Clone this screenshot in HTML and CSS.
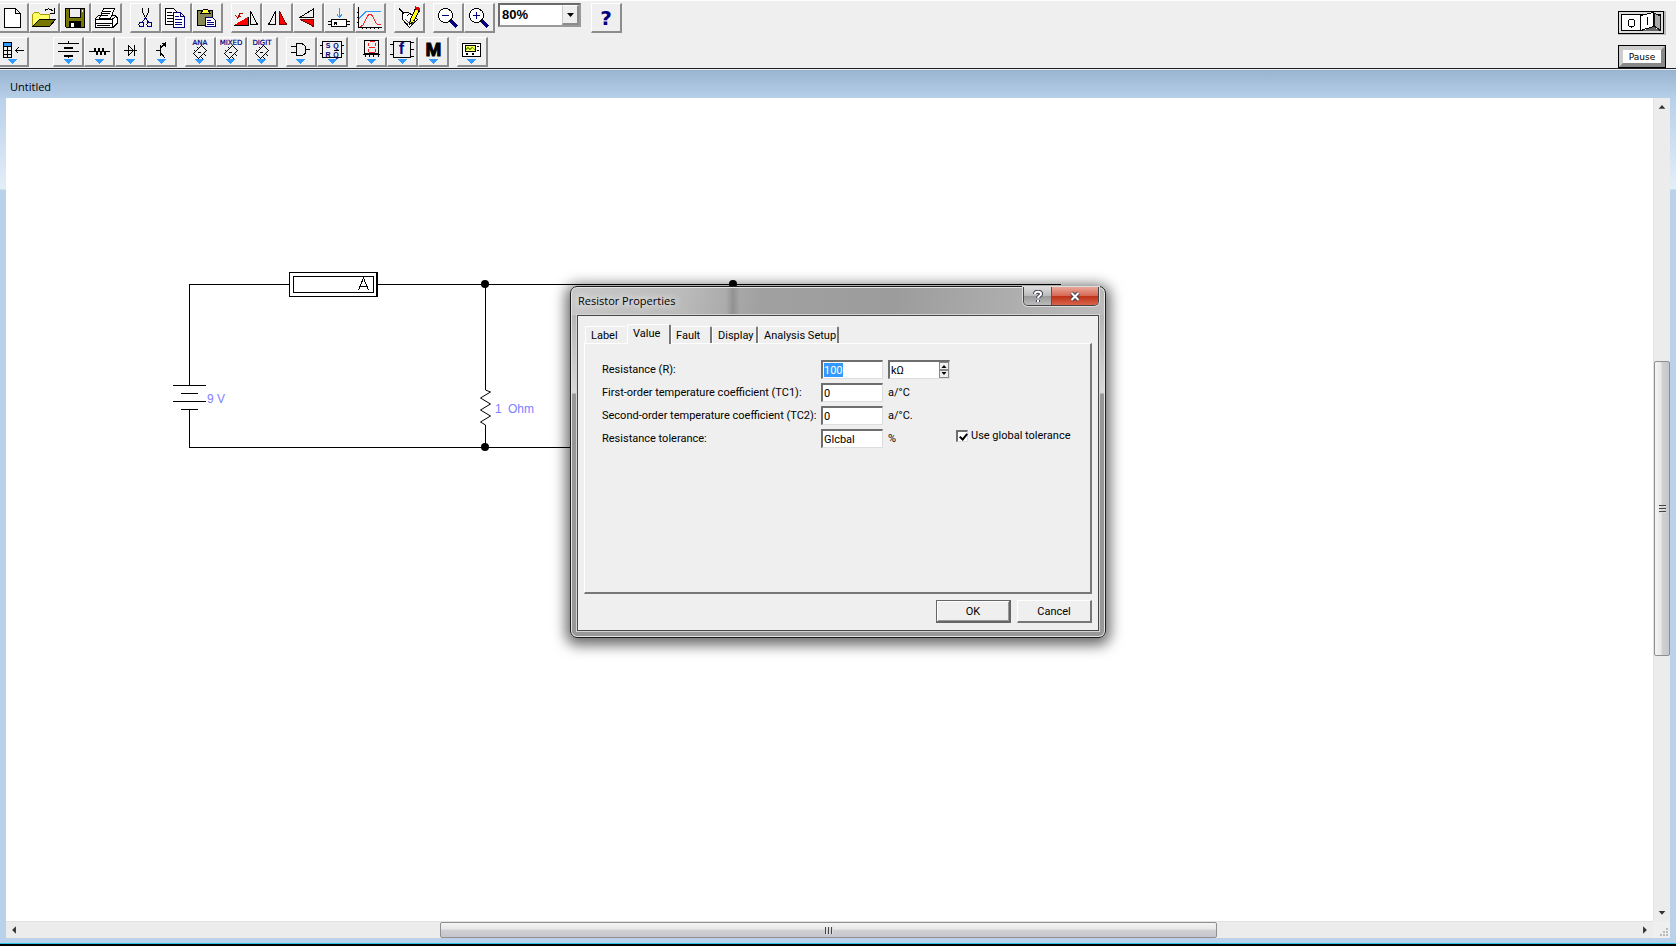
FILE: index.html
```html
<!DOCTYPE html>
<html lang="en">
<head>
<meta charset="utf-8">
<title>Untitled</title>
<link rel="stylesheet" href="styles.css">
</head>
<body>
<header class="toolbars">
  <div class="rows">
    <div class="row">
      <div class="group">
        <button class="tool" aria-label="New"><svg viewBox="-1 4 28 27"><path class="w k" d="M4.500 8.500h11l5 5v14h-16zM15.500 8.500v5h5"/></svg></button>
        <button class="tool" aria-label="Open"><svg viewBox="30 4 28 27"><path d="M32.500 26.500v-12l2-2h4l2 2h9v5" fill="#ff6" stroke="#a90"/><path class="k" d="M32.500 26.500l7-7h16l-6 7z" fill="#770"/><path class="n k" d="M44.500 11.500c2-4 6-3 9 0M54.500 8v5h-5"/></svg></button>
        <button class="tool" aria-label="Save"><svg viewBox="61 4 28 27"><path class="k" d="M65.500 8.500h19v19h-18l-1-1z" fill="#770"/><path class="k" d="M69.500 8.500h11v9h-11z" fill="#eee"/><path d="M69 21h12v7h-12z"/><path d="M71 23h3v4h-3z" fill="#fff"/><path d="M82 10h1v2h-1z" fill="#fff"/></svg></button>
        <button class="tool" aria-label="Print"><svg viewBox="93 4 28 27"><path class="w k" d="M100.500 18.500l4-10h11l-4 10zM95.500 19.500l4-4h2M113 15.500h3l2 2v6l-4 4h-18v-8h17l4-3M113.500 19.500v8M96 23.500h17"/><path class="n k" d="M104 11.500h8M103 13.500h8M102 15.500h7M98 25.500h13"/></svg></button>
      </div>
      <div class="group">
        <button class="tool" aria-label="Cut"><svg viewBox="131 4 28 27"><path class="n k" d="M142.500 8v4l4 8M148.500 8v4l-4 8"/><g class="n navy"><circle cx="141.500" cy="24.500" r="2.500"/><circle cx="149.500" cy="24.500" r="2.500"/><path d="M145.500 18l-3 4M145.500 18l3 4"/></g></svg></button>
        <button class="tool" aria-label="Copy"><svg viewBox="162 4 28 27"><path class="w k" d="M165.500 8.500h8l3 3v13h-11z"/><path class="n k" d="M167 12.500h5M167 15.500h6M167 18.500h6M167 21.500h6"/><path class="w navy" d="M173.500 12.500h7l4 4v11h-11zM180.500 12.500v4h4"/><path class="n navy" d="M175 16.500h4M175 19.500h7M175 22.500h7M175 24.500h7"/></svg></button>
        <button class="tool" aria-label="Paste"><svg viewBox="193 4 28 27"><path class="k" d="M197.500 10.500h15v15h-15z" fill="#885"/><path class="k" d="M200.500 13.500l3-4h4l3 4z" fill="#ff3"/><path class="w navy" d="M205.500 17.500h7l3 3v6h-10z"/><path class="n navy" d="M207 20.500h4M207 22.500h7M207 24.500h7"/></svg></button>
      </div>
      <div class="group">
        <button class="tool" aria-label="Rotate"><svg viewBox="232 4 28 27"><path d="M234 25l14-8v8z" fill="#f00"/><path class="n k" d="M234 25.500h14.500v-9M250.500 11.500v13h7z"/><path class="n" stroke="#b00" d="M243 13.500h-3l-2 4M235.500 15l2 3 3-2"/></svg></button>
        <button class="tool" aria-label="Flip horizontal"><svg viewBox="263 4 28 27"><path class="n k" d="M275.500 11.500v13h-7z"/><path d="M279.500 11.500v13h7z" fill="#f00" stroke="#700"/></svg></button>
        <button class="tool" aria-label="Flip vertical"><svg viewBox="294 4 28 27"><path class="n k" d="M300.500 17l13-8v8z"/><path d="M300.500 19.500h13v7z" fill="#f00" stroke="#700"/></svg></button>
        <button class="tool" aria-label="Component properties"><svg viewBox="325 4 28 27"><path class="n" stroke="#39f" d="M339.500 8v9M337 14.500l2.500 3 2.500-3"/><path class="w k" d="M331.500 19.500h15v7h-15z"/><path class="n k" d="M328 21.500h3M328 24.500h3M347 21.500h3M347 24.500h3M334.500 25v-3h2v3M335 23.500h2"/></svg></button>
        <button class="tool" aria-label="Graph"><svg viewBox="357 4 28 27"><path class="n k" d="M359.500 7v20.500h23M358 12.500h2M358 17.500h2M358 22.500h2M363.500 27v2M367.500 27v2M371.500 27v2M375.500 27v2M379.500 27v2"/><path class="n" stroke="#39f" d="M360 18.500l7-7h15"/><path class="n" stroke="#f22" d="M361 26.500c6 0 5-12 10-12s4 10 8 10h3"/></svg></button>
      </div>
      <div class="group">
        <button class="tool" aria-label="Describe"><svg viewBox="395 4 28 27"><path class="w k" d="M402.500 12.500h6l9 7-8 8-7-8z"/><path class="n k" d="M399 8.500l5 5M402.500 19.500v-7M407 15.500l3-2"/><path class="n" stroke="#555" d="M405 19l5 5M407 24l7-6M411 25l4-4"/><path class="k" d="M415.500 8.500l4 2-6 11-4 3 1-5z" fill="#ff0"/><path d="M415 6l5 2v3l-5-2z" fill="#d00"/></svg></button>
      </div>
      <div class="group">
        <button class="tool" aria-label="Zoom out"><svg viewBox="435 4 28 27"><circle class="w k" cx="446.500" cy="15.500" r="7"/><path class="n navy" d="M443 15.500h7"/><path class="n navy thick" d="M452 21l6 6"/></svg></button>
        <button class="tool" aria-label="Zoom in"><svg viewBox="465 4 28 27"><circle class="w k" cx="476.500" cy="15.500" r="7"/><path class="n navy" d="M473 15.500h7M476.500 12v7"/><path class="n navy thick" d="M482 21l6 6"/></svg></button>
      </div>
      <div class="zoom">
        <select aria-label="Zoom level"><option>80%</option></select>
        <svg class="drop" viewBox="0 0 14 17"><path d="M4 7h7l-3.500 4z"/></svg>
      </div>
      <div class="group">
        <button class="tool help" aria-label="Help">?</button>
      </div>
    </div>
    <div class="row">
      <div class="group bin">
        <button class="tool" aria-label="Parts bin"><svg viewBox="-1 38 28 27"><path d="M3 42h9v4h-9z" fill="#39f"/><path class="n k" d="M3.500 42.500h8v15h-8zM3 46.500h9M3 50.500h9M3 54.500h9M7.500 46v12M15 50.500h9M18.500 47.500l-3 3 3 3"/><path class="tri" d="M8 59h9l-4.500 5z"/></svg></button>
      </div>
      <div class="group">
        <button class="tool" aria-label="Sources"><svg viewBox="54 38 28 27"><path class="n k" d="M68.500 41v3M58 43.500h21M58 51.500h21M68.500 55v3"/><path d="M64 47h9v2h-9zM64 55h9v2h-9z"/><path class="tri" d="M64 59h9l-4.500 5z"/></svg></button>
        <button class="tool" aria-label="Basic"><svg viewBox="85 38 28 27"><path class="n k" d="M89 51.500h5l1-3 2 6 2-6 2 6 2-6 2 6 1-3h4"/><path class="tri" d="M95 59h9l-4.500 5z"/></svg></button>
        <button class="tool" aria-label="Diodes"><svg viewBox="116 38 28 27"><path class="n k" d="M124 50.500h13M128.500 45.500v10l5-5zM134.500 45v11"/><path class="tri" d="M126 59h9l-4.500 5z"/></svg></button>
        <button class="tool" aria-label="Transistors"><svg viewBox="147 38 28 27"><path class="n k" d="M156 50.500h4M160.500 45v11M160 49l6-7M160 52l5 6"/><path d="M161 43h5v4z"/><path class="tri" d="M157 59h9l-4.500 5z"/></svg></button>
      </div>
      <div class="group">
        <button class="tool" aria-label="Analog ICs"><svg viewBox="186 38 28 27"><text class="tiny" x="200" y="45">ANA</text><path class="n k" d="M193.500 53.500l8-8 5 5-8 8zM194 50l2 2M197 47l2 2M204 54l2 2M201 57l2 2M198 52.500h3"/><path class="tri" d="M195 59h9l-4.500 5z"/></svg></button>
        <button class="tool" aria-label="Mixed ICs"><svg viewBox="217 38 28 27"><text class="tiny" x="231" y="45">MIXED</text><path class="n k" d="M224.500 53.500l8-8 5 5-8 8zM225 50l2 2M228 47l2 2M235 54l2 2M232 57l2 2M229 52.500h3"/><path class="tri" d="M226 59h9l-4.500 5z"/></svg></button>
        <button class="tool" aria-label="Digital ICs"><svg viewBox="248 38 28 27"><text class="tiny" x="262" y="45">DIGIT</text><path class="n k" d="M255.500 53.500l8-8 5 5-8 8zM256 50l2 2M259 47l2 2M266 54l2 2M263 57l2 2M260 52.500h3"/><path class="tri" d="M257 59h9l-4.500 5z"/></svg></button>
      </div>
      <div class="group">
        <button class="tool" aria-label="Logic gates"><svg viewBox="288 38 28 27"><path class="n k" d="M297.500 43.500h5c6 2 6 11 0 12h-5zM292 46.500h5M292 52.500h5M307 49.500h4"/><path class="tri" d="M297 59h9l-4.500 5z"/></svg></button>
        <button class="tool" aria-label="Digital"><svg viewBox="318 38 28 27"><path class="n k" d="M322.500 41.500h19v16h-19z"/><path class="n k" d="M320 45.500h3M320 53.500h3M342 45.500h2M342 53.500h2M334 50.500h5"/><text class="mini" x="328" y="48">S</text><text class="mini" x="336" y="48">Q</text><text class="mini" x="328" y="57">R</text><text class="mini" x="336" y="57">Q</text><path class="tri" d="M328 59h9l-4.500 5z"/></svg></button>
      </div>
      <div class="group">
        <button class="tool" aria-label="Indicators"><svg viewBox="357 38 28 27"><path class="n k" d="M364.500 40.500h14v13h-14z"/><path class="n" stroke="#e22" d="M369.500 41.500h5M368.500 43v3M375.500 43v3M369 47.500h6M368.500 49v3M375.500 49v3M369 52.500h6"/><path class="n k" d="M363 54.500h17M365.500 55v2M369.500 55v2M373.500 55v2M378.500 55v2"/><path class="tri" d="M367 59h9l-4.500 5z"/></svg></button>
        <button class="tool" aria-label="Controls"><svg viewBox="388 38 28 27"><path class="n k" d="M393.500 41.500h17v16h-17z"/><path class="n k" d="M390 44.500h3M390 54.500h3M411 42.500h3M411 49.500h3M411 56.500h3"/><text class="letter f" x="401.500" y="54">f</text><path class="tri" d="M398 59h9l-4.500 5z"/></svg></button>
        <button class="tool" aria-label="Miscellaneous"><svg viewBox="419 38 28 27"><text class="letter m" x="433.500" y="56">M</text><path class="tri" d="M429 59h9l-4.500 5z"/></svg></button>
      </div>
      <div class="group">
        <button class="tool" aria-label="Instruments"><svg viewBox="458 38 28 27"><path class="w k" d="M462.500 43.500h18v13h-18z"/><path class="k" d="M465.500 45.500h10v6h-10z" fill="#ff6"/><path class="n" stroke="#6a0" d="M466 49.500l2-2 2 2 2-2 3 2"/><path d="M466 53h2v2h-2zM472 53h2v2h-2zM477 46h2v1h-2zM477 50h2v1h-2z"/><path class="tri" d="M467 59h9l-4.500 5z"/></svg></button>
      </div>
    </div>
  </div>
  <div class="run">
    <button class="power" aria-label="Power switch"><svg viewBox="0 0 48 24"><path d="M0 0h48v24H0z" fill="#bbb"/><path class="k" d="M.500 .500h45v22H.500z" fill="#ddd"/><path class="w k" d="M3.500 3.500h39v16h-39z"/><ellipse class="n k" cx="13.500" cy="12" rx="3.500" ry="4"/><path class="w k" d="M22.500 4.500l13-3v14l-13 4z"/><path d="M36 2l6 3v14l-6-4z" fill="#aaa" stroke="#111"/><path d="M23 20l13-4 6 4z" fill="#666"/><path class="n k" d="M29.500 6v8"/></svg></button>
    <button class="pause">Pause</button>
  </div>
</header>

<main class="window">
  <h1 class="caption">Untitled</h1>
  <div class="body">
    <section class="canvas" aria-label="Circuit">
      <svg class="circuit" viewBox="6 98 1100 380">
        <path class="n k" d="M189.500 385v-100.500h100M378 284.500h683M485.500 284v106M485.500 425v22M189.500 409v38.500h390M173 385.500h33M181 393.500h17M173 401.500h33M181 409.500h17"/>
        <path class="n k" d="M289.500 272.500h88v24h-88zM376.500 272v25M293.500 276.500h80v16h-80zM358.500 290l5-12 5 12M360 286.500h7"/>
        <path class="n k smooth" d="M485.500 390l5 2-10 6 10 6-10 6 10 6-10 6 5 3"/>
        <circle cx="485" cy="284" r="4"/><circle cx="485" cy="447" r="4"/><circle cx="733" cy="284" r="4"/>
        <text class="value" x="207" y="403">9 V</text>
        <text class="value" x="495" y="413">1</text>
        <text class="value" x="508" y="413">Ohm</text>
      </svg>

      <div class="dialog" role="dialog" aria-labelledby="dlg-title">
        <div class="titlebar">
          <h2 id="dlg-title">Resistor Properties</h2>
          <div class="sysbuttons">
            <button class="ask" aria-label="Help"><svg viewBox="0 0 12 13"><path class="glyph" d="M3 4c0-3 6-3 6 0 0 2-3 2-3 4M6 10v2"/><path class="glyph in" d="M3 4c0-3 6-3 6 0 0 2-3 2-3 4M6 10v2"/></svg></button>
            <button class="close" aria-label="Close"><svg viewBox="0 0 12 13"><path class="glyph" d="M2.500 3l7 7M9.500 3l-7 7"/><path class="glyph in" d="M2.500 3l7 7M9.500 3l-7 7"/></svg></button>
          </div>
        </div>
        <form class="client">
          <div class="tabs" role="tablist">
            <button type="button" class="tab t1" role="tab">Label</button>
            <button type="button" class="tab t2 on" role="tab" aria-selected="true">Value</button>
            <button type="button" class="tab t3" role="tab">Fault</button>
            <button type="button" class="tab t4" role="tab">Display</button>
            <button type="button" class="tab t5" role="tab">Analysis Setup</button>
          </div>
          <div class="panel" role="tabpanel">
            <label for="res">Resistance (R):</label>
            <div class="field"><input class="picked" id="res" value="100" size="3"></div>
            <div class="field unit"><input id="unit" aria-label="Unit" value="kΩ">
              <span class="spin"><button type="button" aria-label="Larger unit"><svg viewBox="0 0 7 4"><path d="M1 4l2.500-3 2.500 3z"/></svg></button><button type="button" aria-label="Smaller unit"><svg viewBox="0 0 7 4"><path d="M1 0l2.500 3 2.500-3z"/></svg></button></span></div>
            <label for="tc1">First-order temperature coefficient (TC1):</label>
            <div class="field"><input id="tc1" value="0"></div>
            <span class="suffix">a/°C</span>
            <label for="tc2">Second-order temperature coefficient (TC2):</label>
            <div class="field"><input id="tc2" value="0"></div>
            <span class="suffix">a/°C.</span>
            <label for="tol">Resistance tolerance:</label>
            <div class="field"><input id="tol" value="Glcbal"></div>
            <span class="suffix">%</span>
            <label class="check"><input type="checkbox" checked> Use global tolerance</label>
          </div>
          <div class="actions">
            <button type="button" class="push default">OK</button>
            <button type="button" class="push">Cancel</button>
          </div>
        </form>
      </div>
    </section>
    <div class="vbar">
      <svg class="arrow" viewBox="0 0 17 17"><path d="M5 11l3.500-4 3.500 4z"/></svg>
      <div class="track"><div class="thumb"><i></i><i></i><i></i></div></div>
      <svg class="arrow" viewBox="0 0 17 17"><path d="M5 7l3.500 4 3.500-4z"/></svg>
    </div>
    <div class="hbar">
      <svg class="arrow" viewBox="0 0 17 17"><path d="M10 4.500l-4 4 4 4z"/></svg>
      <div class="track"><div class="thumb"><i></i><i></i><i></i></div></div>
      <svg class="arrow" viewBox="0 0 17 17"><path d="M7 4.500l4 4-4 4z"/></svg>
    </div>
    <svg class="grip" viewBox="0 0 17 17"><path d="M13 7h2v2h-2zM10 10h2v2h-2zM13 10h2v2h-2zM7 13h2v2h-2zM10 13h2v2h-2zM13 13h2v2h-2z"/></svg>
  </div>
</main>
</body>
</html>
```
FILE: styles.css
```css
* { box-sizing: border-box; }
body {
  margin: 0;
  height: 100vh;
  display: flex;
  flex-direction: column;
  overflow: hidden;
  background: #b9d1ea;
  color: #000;
  font: 11px/13px Roboto, Arial, sans-serif;
}
button, input, select { font: inherit; color: inherit; margin: 0; padding: 0; }
h1, h2 { margin: 0; font-weight: normal; font-family: "Open Sans", sans-serif; }
svg { display: block; }

/* stroke and fill helpers for the line icons */
.w { fill: #fff; }
.n { fill: none; }
.k { stroke: #000; }
.navy { stroke: #000080; }
.thick { stroke-width: 3; }
.tri { fill: #3399ff; }

/* toolbars */
.toolbars {
  display: flex;
  justify-content: space-between;
  background: #efefef;
  border-top: 1px solid #fff;
  border-bottom: 1px solid #222;
}
.rows { display: flex; flex-direction: column; gap: 4px; padding: 2px 0 1px; margin-left: -2px; }
.row { display: flex; gap: 8px; }
.group { display: flex; }
.bin { margin-right: 16px; }
.tool {
  width: 31px;
  height: 30px;
  background: #efefef;
  border: solid;
  border-width: 1px 2px 2px 1px;
  border-color: #fff #8c8c8c #8c8c8c #fff;
}
.tool svg { width: 28px; height: 27px; shape-rendering: crispEdges; }
.help { color: #000080; font: bold 20px/26px "DejaVu Sans", sans-serif; }
.tiny { font: 7px "DejaVu Sans", sans-serif; fill: #000080; stroke: #000080; stroke-width: .200px; text-anchor: middle; }
.mini { font: bold 7px "Liberation Sans", sans-serif; fill: #000080; text-anchor: middle; }
.letter { font-family: "Liberation Sans", sans-serif; font-weight: bold; text-anchor: middle; }
.f { font-size: 16px; fill: #000080; }
.m { font-size: 19px; stroke: #000; stroke-width: 1px; }
.zoom {
  position: relative;
  width: 83px;
  height: 24px;
  margin: 0 2px 0 -5px;
  border: 2px solid;
  border-color: #6a6a6a #999 #999 #6a6a6a;
  background: #fff;
}
.zoom select {
  appearance: none;
  width: 100%;
  height: 18px;
  border: 0;
  padding-left: 2px;
  background: #fff;
  font: bold 13px "Liberation Sans", sans-serif;
}
.drop {
  position: absolute;
  top: 0;
  right: 0;
  width: 17px;
  height: 20px;
  background: #efefef;
  border: solid;
  border-width: 1px 2px 2px 1px;
  border-color: #fff #8c8c8c #8c8c8c #ccc;
  pointer-events: none;
}
.run { display: flex; flex-direction: column; gap: 10px; padding: 10px 10px 0 0; }
.power { width: 48px; height: 24px; border: 0; background: none; }
.power svg { width: 48px; height: 24px; shape-rendering: crispEdges; }
.pause {
  width: 48px;
  height: 23px;
  background: #fff;
  border: 5px solid;
  border-color: #ccc #888 #888 #ccc;
  outline: 1px solid #000;
  outline-offset: -1px;
  font: 9px/12px "DejaVu Sans", sans-serif;
}

/* document window */
.window {
  flex: 1;
  min-height: 0;
  display: flex;
  flex-direction: column;
  padding: 0 6px 6px;
  background: linear-gradient(#99b4d1, #b9d1ea 30px, #e4eef8 119px, #b9d1ea 120px);
  border-top: 1px solid #e8eef4;
  border-bottom: 2px solid #000;
  box-shadow: inset 0 -1px #2cc4e4;
}
.caption { height: 28px; padding: 0 4px; font-size: 11px; line-height: 34px; }
.body {
  flex: 1;
  min-height: 0;
  display: grid;
  grid-template: minmax(0, 1fr) 17px / minmax(0, 1fr) 17px;
}
.canvas { position: relative; background: #fff; overflow: hidden; }
.circuit { width: 1100px; height: 380px; shape-rendering: crispEdges; }
.circuit circle, .smooth { shape-rendering: auto; }
.value { font: 12px "Liberation Sans", sans-serif; fill: #8080ff; }

.vbar, .hbar { display: flex; background: #ececec; }
.vbar { flex-direction: column; border-left: 1px solid #e2e2e2; }
.hbar { border-top: 1px solid #e2e2e2; }
.arrow { flex: none; width: 17px; height: 17px; fill: #333; }
.vbar .arrow { width: 16px; }
.hbar .arrow { height: 16px; }
.track { flex: 1; display: flex; }
.thumb { display: flex; justify-content: center; align-items: center; gap: 1px; border: 1px solid #8f8f8f; border-radius: 2px; }
.vbar .track { flex-direction: column; }
.vbar .thumb { flex-direction: column; height: 37.400%; margin-top: 246px; background: linear-gradient(90deg, #f5f5f5, #e6e6e8 45%, #cfcfd4 50%, #c6c6cc); }
.hbar .thumb { width: 48.200%; margin-left: 417px; background: linear-gradient(#f5f5f5, #e6e6e8 45%, #cfcfd4 50%, #c6c6cc); }
.thumb i { background: #444; border: 0 solid #ddd; }
.vbar i { width: 7px; height: 2px; border-bottom-width: 1px; }
.hbar i { width: 2px; height: 7px; border-right-width: 1px; }
.grip { width: 17px; height: 17px; background: #efefef; fill: #bbb; }

/* dialog floating over the circuit */
.dialog {
  position: absolute;
  left: 564px;
  top: 188px;
  width: 536px;
  padding: 0 6px 6px;
  border: 1px solid #1c1c1c;
  border-radius: 7px;
  background:
    linear-gradient(90deg, transparent 155px, rgba(90, 90, 90, .3) 162px, transparent 169px) 0 0 / 100% 28px no-repeat,
    linear-gradient(100deg, #c8c8c8, #bbb 110px, #a0a0a0 190px, #9c9c9c 320px, #bcbcbc) 0 0 / 100% 28px no-repeat,
    linear-gradient(#aaa, #d8d8d8 106px, #989898 107px);
  box-shadow: inset 0 0 0 1px #e4e4e4, 0 3px 14px 4px rgba(0, 0, 0, .6);
}
.titlebar { display: flex; justify-content: space-between; height: 28px; }
.titlebar h2 { padding-left: 1px; font-size: 11px; line-height: 28px; text-shadow: 0 0 8px #fff, 0 0 8px #fff; }
.sysbuttons { display: flex; height: 19px; border: 1px solid #444; border-top: 0; border-radius: 0 0 5px 5px; overflow: hidden; box-shadow: 0 0 0 1px #ddd; }
.sysbuttons button { display: flex; justify-content: center; align-items: center; border: 0; }
.sysbuttons svg { width: 12px; height: 13px; }
.ask { width: 27px; background: linear-gradient(#ddd, #bbb 48%, #999 50%, #bbb); }
.close { width: 47px; background: linear-gradient(#e9a799, #d66a55 48%, #bd3018 50%, #d8644a); }
.sysbuttons .close { border-left: 1px solid #555; }
.glyph { fill: none; stroke: #445; stroke-width: 4; }
.in { stroke: #fff; stroke-width: 2; }
.client {
  padding: 8px 6px 7px;
  border: 1px solid #484848;
  background: #efefef;
  box-shadow: 0 0 0 1px #d4d4d4;
}
.tabs { display: flex; align-items: flex-end; height: 19px; padding-left: 1px; }
.tab {
  height: 17px;
  border: solid;
  border-width: 1px 2px 0 1px;
  border-color: #fff #777 #fff #fff;
  border-radius: 2px 2px 0 0;
  background: #efefef;
  text-align: left;
  padding-left: 5px;
  white-space: nowrap;
}
.t1 { width: 42px; border-right-color: #efefef; }
.t2 { width: 44px; }
.t3 { width: 41px; padding-left: 4px; }
.t4 { width: 46px; }
.t5 { width: 81px; }
.on { position: relative; height: 20px; margin-bottom: -1px; padding-bottom: 3px; }
.panel {
  display: grid;
  grid-template-columns: 219px 62px 62px 1fr;
  grid-auto-rows: 19px;
  row-gap: 4px;
  align-items: center;
  height: 251px;
  padding: 16px 16px 16px 17px;
  border: solid;
  border-width: 1px 2px 2px 1px;
  border-color: #fff #777 #777 #fff;
}
.panel > label { grid-column: 1; }
.panel > .check { grid-column: 4; align-self: start; display: flex; align-items: center; gap: 3px; padding-left: 11px; }
.field {
  display: flex;
  height: 19px;
  border: solid;
  border-width: 2px 1px 1px 2px;
  border-color: #6e6e6e #ddd #ddd #6e6e6e;
  background: #fff;
}
.unit { margin-left: 5px; width: 62px; }
.field input { flex: 1; min-width: 0; width: 100%; border: 0; padding-left: 1px; background: none; outline: 0; }
.field .picked { flex: none; width: 19px; height: 14px; margin: 1px; padding: 0; background: #3399ff; color: #fff; }
.spin { display: flex; flex-direction: column; width: 10px; }
.spin button { flex: 1; min-height: 0; display: flex; align-items: center; border: 1px solid #888; background: #efefef; }
.spin svg { width: 8px; height: 4px; }
.suffix { padding-left: 5px; }
.check input {
  appearance: none;
  width: 12px;
  height: 12px;
  border: solid;
  border-width: 2px 1px 1px 2px;
  border-color: #6e6e6e #ddd #ddd #6e6e6e;
  background: #fff;
}
.check input:checked::before {
  content: "";
  display: block;
  width: 3px;
  height: 6px;
  margin: 0 0 0 3px;
  border: solid #000;
  border-width: 0 2px 2px 0;
  transform: rotate(40deg);
}
.actions { display: flex; justify-content: flex-end; gap: 6px; padding-top: 6px; }
.push {
  width: 75px;
  height: 23px;
  border: solid;
  border-width: 1px 2px 2px 1px;
  border-color: #fff #777 #777 #fff;
  background: #efefef;
}
.default { border-color: #666; box-shadow: inset 1px 1px #fff, inset -1px -1px #999; }
```
